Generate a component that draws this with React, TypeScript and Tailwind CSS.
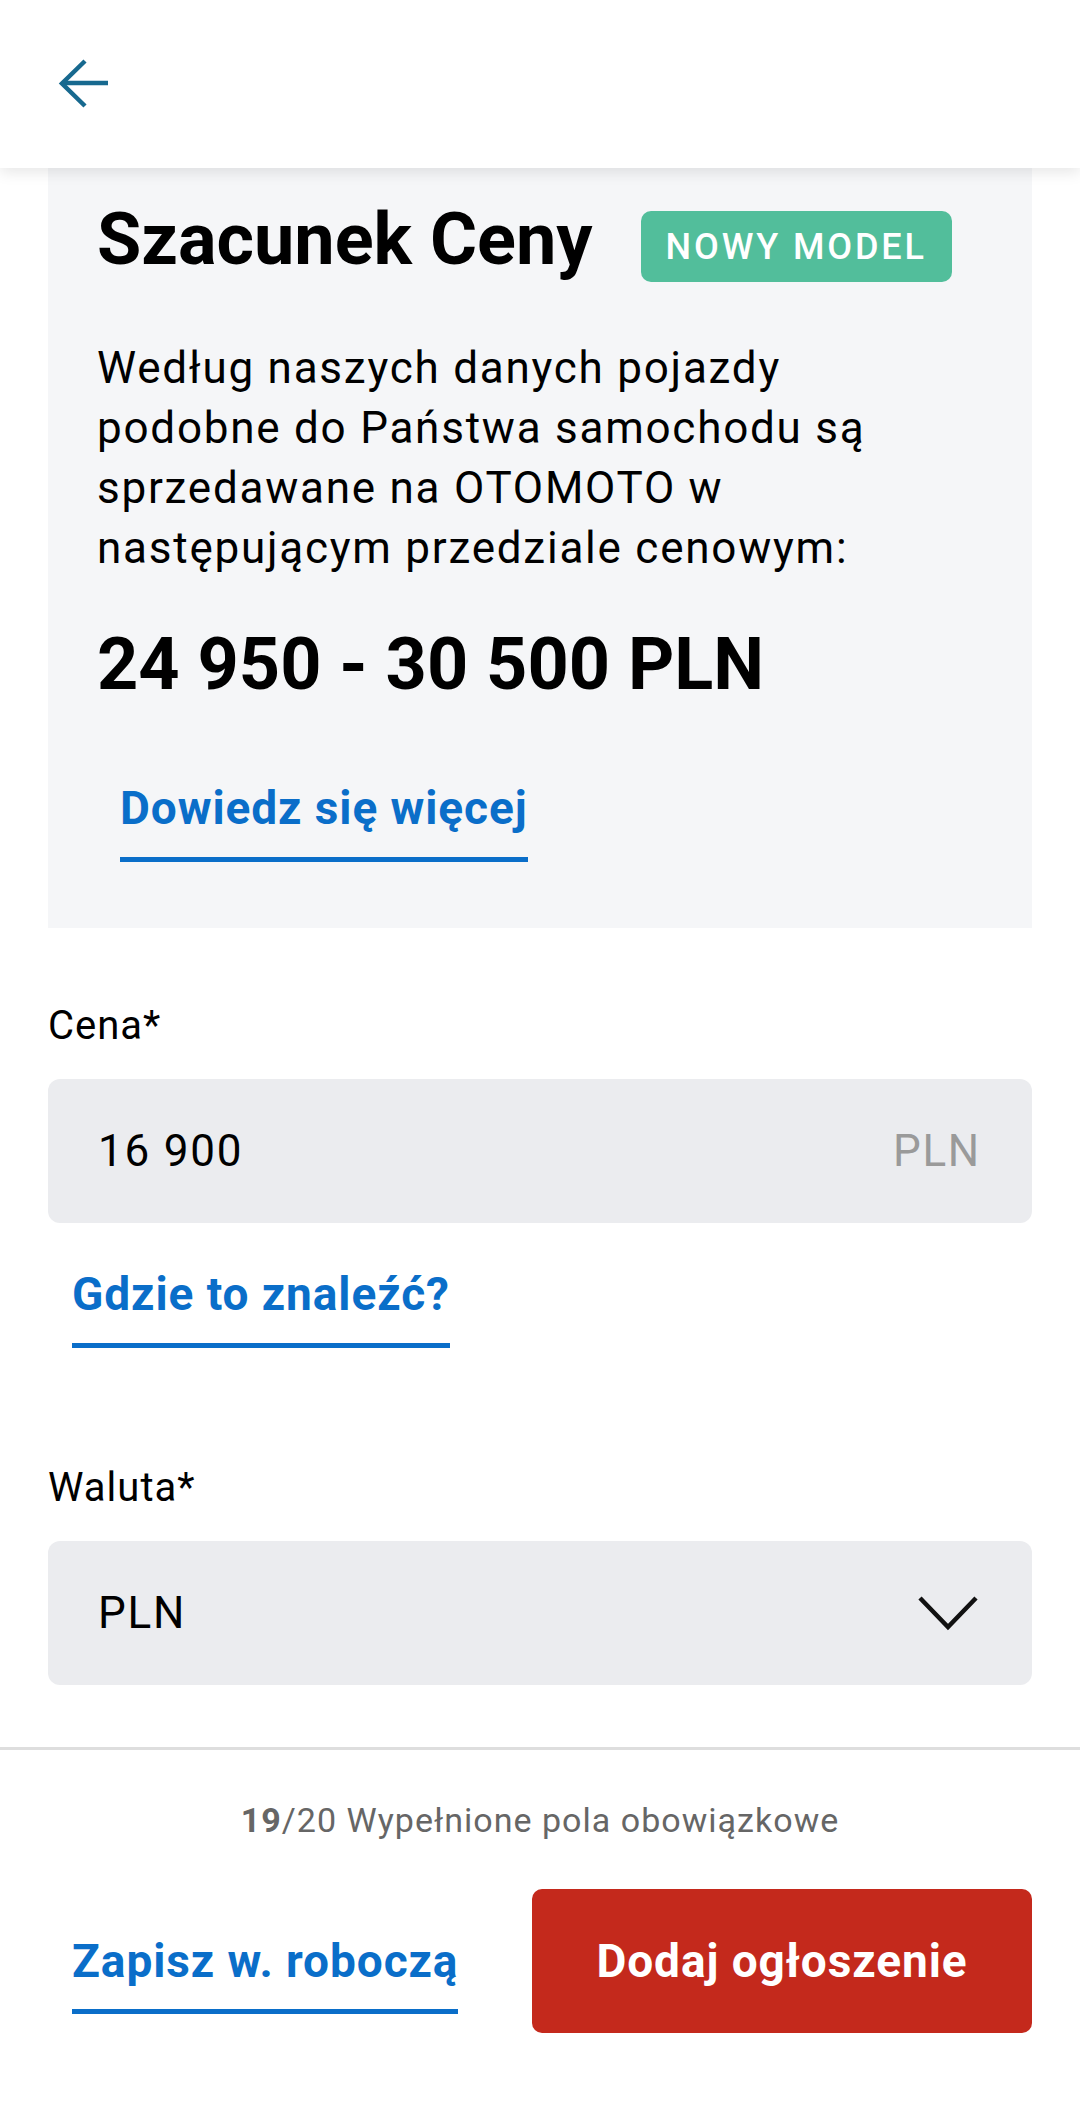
export default function App() {
  return (
    <div className="flex h-[2105px] w-[1080px] flex-col overflow-hidden bg-white font-['Roboto','Liberation_Sans',sans-serif] text-black">
      {/* Top bar */}
      <header className="relative z-10 flex h-[168px] shrink-0 items-center bg-white pl-[58px] shadow-[0_4px_14px_rgba(0,0,0,0.10)]">
        <svg width="52" height="50" viewBox="0 0 52 50" fill="none">
          <path d="M50 24H5" stroke="#17698f" strokeWidth="4.5" />
          <path d="M27 2L4 24.5L27 47" stroke="#17698f" strokeWidth="4.5" strokeLinejoin="miter" />
        </svg>
      </header>

      {/* Form */}
      <main className="flex-1 overflow-hidden px-[48px]">
        <section className="bg-[#f5f6f8] pb-[66px] pl-[49px] pr-[30px] pt-[29px]">
          <div className="flex items-start gap-[48px]">
            <h1 className="text-[72px] font-bold leading-[86px]">Szacunek Ceny</h1>
            <span className="mt-[14px] flex h-[71px] items-center rounded-[10px] bg-[#52be9b] px-[25px] text-[36px] font-medium tracking-[0.08em] text-white">
              NOWY MODEL
            </span>
          </div>
          <p className="mt-[55px] text-[44px] leading-[60px] tracking-[0.04em]">
            Według naszych danych pojazdy
            <br />
            podobne do Państwa samochodu są
            <br />
            sprzedawane na OTOMOTO w
            <br />
            następującym przedziale cenowym:
          </p>
          <p className="mt-[44px] text-[72px] font-bold leading-[86px]">24 950 - 30 500 PLN</p>
          <a className="ml-[23px] mt-[73px] inline-block border-b-[5px] border-[#0a6ec9] pb-[22px] text-[46px] font-bold leading-[54px] tracking-[0.02em] text-[#0a6ec9]">
            Dowiedz się więcej
          </a>
        </section>

        <label className="mt-[74px] block text-[40px] leading-[48px] tracking-[0.025em]">Cena*</label>
        <div className="mt-[29px] flex h-[144px] items-center justify-between rounded-[12px] bg-[#ebecef] pl-[50px] pr-[51px]">
          <span className="text-[44px] leading-[54px] tracking-[0.04em]">16 900</span>
          <span className="text-[44px] leading-[54px] tracking-[0.04em] text-[#9a9a9a]">PLN</span>
        </div>
        <a className="ml-[24px] mt-[44px] inline-block border-b-[5px] border-[#0a6ec9] pb-[22px] text-[46px] font-bold leading-[54px] tracking-[0.02em] text-[#0a6ec9]">
          Gdzie to znaleźć?
        </a>

        <label className="mt-[116px] block text-[40px] leading-[48px] tracking-[0.025em]">Waluta*</label>
        <div className="mt-[29px] flex h-[144px] items-center justify-between rounded-[12px] bg-[#ebecef] pl-[50px] pr-[54px]">
          <span className="text-[44px] leading-[54px] tracking-[0.04em]">PLN</span>
          <svg width="60" height="36" viewBox="0 0 60 36" fill="none">
            <path d="M2 3L30 32L58 3" stroke="#111" strokeWidth="4.5" />
          </svg>
        </div>
      </main>

      {/* Bottom bar */}
      <footer className="h-[358px] shrink-0 border-t-[3px] border-[#dedede] px-[48px] pt-[50px]">
        <p className="text-center text-[34px] leading-[40px] tracking-[0.03em] text-[#666]">
          <b className="font-bold">19</b>/20 Wypełnione pola obowiązkowe
        </p>
        <div className="mt-[49px] flex items-start justify-between">
          <a className="ml-[24px] mt-[45px] inline-block border-b-[5px] border-[#0a6ec9] pb-[21px] text-[46px] font-bold leading-[54px] tracking-[0.02em] text-[#0a6ec9]">
            Zapisz w. roboczą
          </a>
          <button className="flex h-[144px] w-[500px] items-center justify-center rounded-[10px] bg-[#c4291c] text-[46px] font-bold tracking-[0.02em] text-white">
            Dodaj ogłoszenie
          </button>
        </div>
      </footer>
    </div>
  );
}
